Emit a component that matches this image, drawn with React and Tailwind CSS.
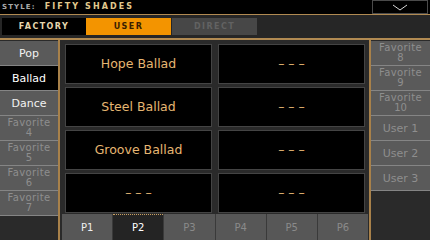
const left = [
  { label: 'Pop', kind: 'on' },
  { label: 'Ballad', kind: 'sel' },
  { label: 'Dance', kind: 'on' },
  { label: 'Favorite', num: '4', kind: 'dim' },
  { label: 'Favorite', num: '5', kind: 'dim' },
  { label: 'Favorite', num: '6', kind: 'dim' },
  { label: 'Favorite', num: '7', kind: 'dim' },
]

const right = [
  { label: 'Favorite', num: '8' },
  { label: 'Favorite', num: '9' },
  { label: 'Favorite', num: '10' },
  { label: 'User 1' },
  { label: 'User 2' },
  { label: 'User 3' },
]

const empty = '\u2013 \u2013 \u2013'
const cells = ['Hope Ballad', empty, 'Steel Ballad', empty, 'Groove Ballad', empty, empty, empty]

const pages = ['P1', 'P2', 'P3', 'P4', 'P5', 'P6']

function SideButton({ label, num, kind }) {
  const bg = kind === 'sel' ? 'bg-black text-white' : kind === 'on' ? 'bg-[#5a5a5a] text-[#f2f2f2]' : 'bg-[#5a5a5a] text-[#8e8e8e]'
  return (
    <div className={`h-[25px] flex flex-col items-center justify-center border-b border-[#858585] ${bg}`}>
      {num ? (
        <>
          <span className="text-[10px] leading-[10px] tracking-[0.04em]">{label}</span>
          <span className="text-[10px] leading-[10px]">{num}</span>
        </>
      ) : (
        <span className="text-[11px] leading-none">{label}</span>
      )}
    </div>
  )
}

export default function App() {
  return (
    <div className="w-[430px] h-[240px] overflow-hidden bg-[#2a2a2a] flex flex-col" style={{ fontFamily: '"DejaVu Sans", sans-serif' }}>
      {/* header */}
      <div className="h-[14px] bg-black flex items-center pl-[2px]">
        <span className="text-[7px] font-bold tracking-[0.16em] text-[#a9a9a9]">STYLE:</span>
        <span className="ml-[9px] text-[8px] font-bold tracking-[0.26em] text-[#e2c98e]">FIFTY SHADES</span>
        <div className="ml-auto mr-[2px] w-[56px] h-[14px] border border-[#4a4a4a] bg-black flex items-center justify-center">
          <svg width="16" height="7" viewBox="0 0 16 7" fill="none" stroke="#d8d8d8" strokeWidth="1">
            <path d="M1 1l7 5 7-5" />
          </svg>
        </div>
      </div>
      <div className="h-px bg-[#b18a52]" />

      {/* source tabs */}
      <div className="h-[23px] bg-[#262626] flex items-start pt-[3px] pl-[2px]">
        <div className="w-[84px] h-[17px] bg-black flex items-center justify-center text-[8px] font-bold tracking-[0.18em] text-[#e6d6ae]">FACTORY</div>
        <div className="w-[85px] h-[17px] bg-[#f39400] flex items-center justify-center text-[8px] font-bold tracking-[0.18em] text-[#3a1e00]">USER</div>
        <div className="ml-[1px] w-[85px] h-[17px] bg-[#474747] flex items-center justify-center text-[8px] font-bold tracking-[0.18em] text-[#626262]">DIRECT</div>
      </div>
      <div className="h-[2px] bg-[#b18a52]" />

      {/* body */}
      <div className="flex flex-1 min-h-0">
        <div className="w-[58px] flex flex-col pt-px">
          {left.map((b, i) => (
            <SideButton key={i} {...b} />
          ))}
        </div>
        <div className="w-[2px] bg-[#a8814a]" />

        <div className="w-[309px] flex flex-col">
          <div className="grid grid-cols-[147px_147px] gap-x-[6px] gap-y-[3px] pl-[5px] pt-[4px]">
            {cells.map((c, i) => (
              <div key={i} className="h-[40px] bg-black border border-[#444] flex items-center justify-center text-[12.5px] text-[#e6b672]">
                {c}
              </div>
            ))}
          </div>
          <div className="mt-auto h-[26px] ml-[2px] mr-px grid grid-cols-6 gap-px bg-[#3a3a3a]">
            {pages.map((p, i) => (
              <div
                key={p}
                className={`flex items-center justify-center text-[10px] ${
                  i === 1
                    ? 'bg-[#242424] text-white border-t border-dotted border-[#c9a062]'
                    : i === 0
                    ? 'bg-[#575757] text-[#f0f0f0]'
                    : 'bg-[#575757] text-[#8a8a8a]'
                }`}
              >
                {p}
              </div>
            ))}
          </div>
        </div>

        <div className="w-[2px] bg-[#a8814a]" />
        <div className="flex-1 flex flex-col pt-px">
          {right.map((b, i) => (
            <SideButton key={i} {...b} kind="dim" />
          ))}
        </div>
      </div>
    </div>
  )
}
